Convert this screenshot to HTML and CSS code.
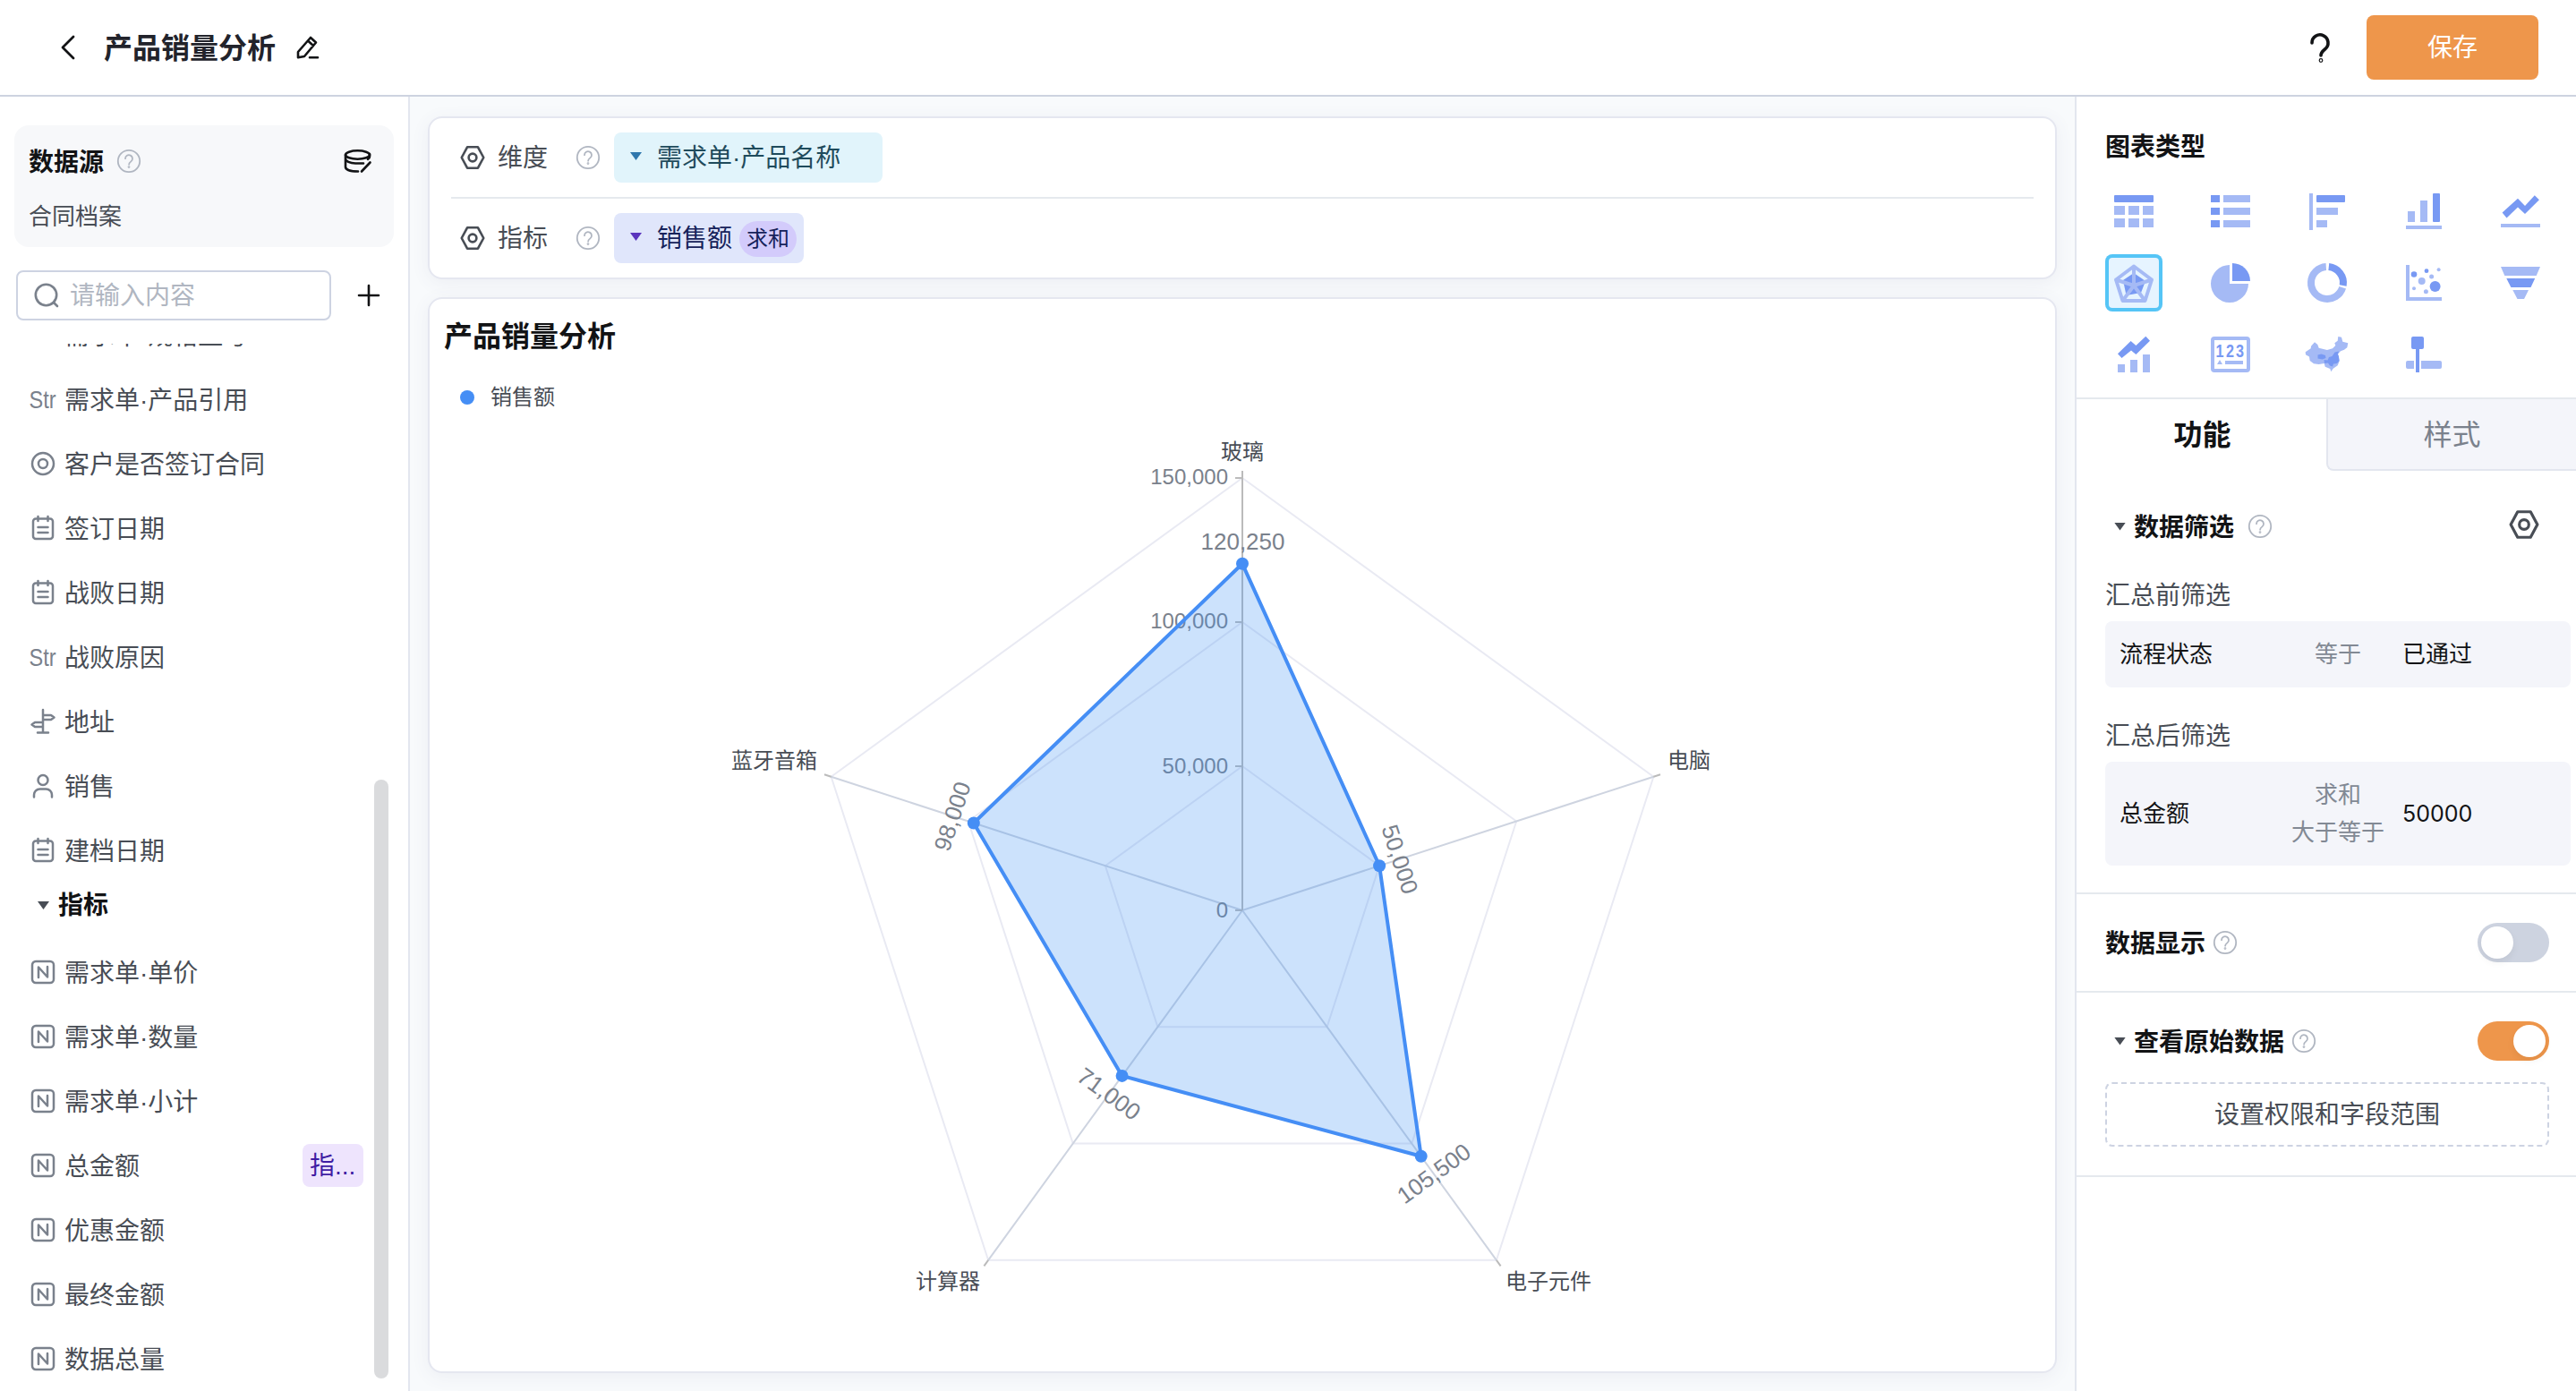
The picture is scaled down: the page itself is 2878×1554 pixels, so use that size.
FILE: index.html
```html
<!DOCTYPE html>
<html lang="zh-CN">
<head>
    <meta charset="UTF-8">
    <title>产品销量分析</title>
    <link rel="stylesheet" href="styles.css">
</head>
<body>
    <!-- shared icons -->
    <svg class="sprite">
        <symbol id="i-help" viewBox="0 0 28 28"><circle cx="14" cy="14" r="12.2" /><path d="M10 11.2a4 4 0 1 1 6.4 3.2c-1.5 1.1-2.3 1.7-2.3 3.3" /><circle cx="14" cy="20.6" r="0.5" /></symbol>
        <symbol id="i-hex" viewBox="0 0 32 32"><path d="M9.2 2.6h13.6L30 16l-7.2 13.4H9.2L2 16z" /><circle cx="16" cy="16" r="5" /></symbol>
        <symbol id="i-date" viewBox="0 0 32 32"><path d="M10 5.5H8a3 3 0 0 0-3 3V25a3 3 0 0 0 3 3h16a3 3 0 0 0 3-3V8.500a3 3 0 0 0-3-3h-2M10.500 3v5M21.500 3v5M10.500 5.500h11M10.500 15h11M10.500 21h11" /></symbol>
        <symbol id="i-num" viewBox="0 0 32 32"><rect x="4" y="4" width="24" height="24" rx="4" /><path d="M11 22V10.500l10 11V10" /></symbol>
    </svg>

    <header class="header">
        <svg class="back" viewBox="0 0 18 28"><path d="M15 2 3 14l12 12" /></svg>
        <h1>产品销量分析</h1>
        <svg class="edit" viewBox="0 0 28 28"><path d="M3 19 17 3l6 5.500L10 24l-7 1.300zM14 6.500l6 5.500M16 25.200h9" /></svg>
        <svg class="ask" viewBox="0 0 28 36"><path d="M5 13a9 9 0 1 1 14.500 7c-3.500 2.800-4.500 4-4.500 7" /><circle cx="15" cy="32.500" r="0.6" /></svg>
        <button class="save">保存</button>
    </header>

    <div class="layout">
        <aside class="fields">
            <div class="source">
                <div class="source-head">
                    <b>数据源</b>
                    <svg class="help"><use href="#i-help" /></svg>
                    <svg class="db" viewBox="0 0 32 28"><ellipse cx="15.500" cy="7" rx="13.500" ry="4.700" /><path d="M2 7v4.500c0 2.500 5 5 11 5h9M2 11.500v4.500M2 15v5.500c0 3 5.500 5 14 5M29 6v3c0 1-.5 2-2 2.800M29.500 15.500 20 25.500" /></svg>
                </div>
                <div class="source-name">合同档案</div>
            </div>
            <div class="search-row">
                <div class="search">
                    <svg viewBox="0 0 28 28"><circle cx="13.500" cy="13.500" r="11.700" /><path d="m22 22 4 4" /></svg>
                    <span>请输入内容</span>
                </div>
                <svg class="plus" viewBox="0 0 28 28"><path d="M14 3v22M3 14h22" /></svg>
            </div>
            <div class="list">
                <div class="scrolled">
                    <div class="item"><svg class="str" viewBox="0 0 32 32"><text x="0.500" y="26" textLength="30" lengthAdjust="spacingAndGlyphs">Str</text></svg>需求单·规格型号</div>
                    <div class="item"><svg class="str" viewBox="0 0 32 32"><text x="0.500" y="26" textLength="30" lengthAdjust="spacingAndGlyphs">Str</text></svg>需求单·产品引用</div>
                    <div class="item"><svg viewBox="0 0 32 32"><circle cx="16" cy="16" r="12" /><circle cx="16" cy="16" r="5" /></svg>客户是否签订合同</div>
                    <div class="item"><svg><use href="#i-date" /></svg>签订日期</div>
                    <div class="item"><svg><use href="#i-date" /></svg>战败日期</div>
                    <div class="item"><svg class="str" viewBox="0 0 32 32"><text x="0.500" y="26" textLength="30" lengthAdjust="spacingAndGlyphs">Str</text></svg>战败原因</div>
                    <div class="item"><svg viewBox="0 0 32 32"><path d="M16 3v25M10 28.500h12M16 9h9l3.500 2.500L25 14h-9M16 17H7l-3.500 2.500L7 22h9" /></svg>地址</div>
                    <div class="item"><svg viewBox="0 0 32 32"><circle cx="16" cy="9.500" r="5.500" /><path d="M6 28.500V26a6.500 6.500 0 0 1 6.500-6.500h7A6.500 6.500 0 0 1 26 26v2.500" /></svg>销售</div>
                    <div class="item"><svg><use href="#i-date" /></svg>建档日期</div>
                    <div class="group"><i class="caret"></i>指标</div>
                    <div class="item"><svg><use href="#i-num" /></svg>需求单·单价</div>
                    <div class="item"><svg><use href="#i-num" /></svg>需求单·数量</div>
                    <div class="item"><svg><use href="#i-num" /></svg>需求单·小计</div>
                    <div class="item"><svg><use href="#i-num" /></svg>总金额<span class="tag">指...</span></div>
                    <div class="item"><svg><use href="#i-num" /></svg>优惠金额</div>
                    <div class="item"><svg><use href="#i-num" /></svg>最终金额</div>
                    <div class="item"><svg><use href="#i-num" /></svg>数据总量</div>
                </div>
                <div class="scrollbar"></div>
            </div>
        </aside>

        <main class="board">
            <section class="card config">
                <div class="config-row">
                    <svg class="hex"><use href="#i-hex" /></svg>
                    <span class="config-label">维度</span>
                    <svg class="help"><use href="#i-help" /></svg>
                    <div class="chip chip-dim"><i class="caret"></i>需求单·产品名称</div>
                </div>
                <div class="config-row">
                    <svg class="hex"><use href="#i-hex" /></svg>
                    <span class="config-label">指标</span>
                    <svg class="help"><use href="#i-help" /></svg>
                    <div class="chip chip-metric"><i class="caret"></i>销售额<span class="pill">求和</span></div>
                </div>
            </section>

            <section class="card chart">
                <h2>产品销量分析</h2>
                <div class="legend"><i></i>销售额</div>
                <svg class="radar" viewBox="480 470 1816 1062">
                    <g class="grid">
                        <polygon points="1388,534 1847.400,867.700 1671.900,1407.800 1104.100,1407.800 928.600,867.700" />
                        <polygon points="1388,695 1694.200,917.500 1577.300,1277.500 1198.700,1277.500 1081.800,917.500" />
                        <polygon points="1388,856 1541.100,967.200 1482.600,1147.300 1293.400,1147.300 1234.900,967.200" />
                    </g>
                    <path class="spokes" d="M1388 1017 1847.400 867.700M1388 1017l283.900 390.800M1388 1017l-283.900 390.800M1388 1017 928.600 867.700" />
                    <path class="axis" d="M1388 1017V526M1847.400 867.700l7.600-2.500M1671.900 1407.800l4.700 6.500M1104.100 1407.800l-4.700 6.500M928.600 867.700l-7.600-2.500M1380 534h8M1380 695h8M1380 856h8M1380 1017h8" />
                    <g class="ticks">
                        <text x="1372" y="541">150,000</text>
                        <text x="1372" y="702">100,000</text>
                        <text x="1372" y="864">50,000</text>
                        <text x="1372" y="1025">0</text>
                    </g>
                    <polygon class="area" points="1388,629.800 1541.100,967.200 1587.700,1291.800 1253.600,1201.900 1087.800,919.500" />
                    <g class="dots">
                        <circle cx="1388" cy="629.800" r="7" />
                        <circle cx="1541.100" cy="967.200" r="7" />
                        <circle cx="1587.700" cy="1291.800" r="7" />
                        <circle cx="1253.600" cy="1201.900" r="7" />
                        <circle cx="1087.800" cy="919.500" r="7" />
                    </g>
                    <g class="values">
                        <text transform="translate(1388.500 605)" y="9">120,250</text>
                        <text transform="translate(1564 960) rotate(72)" y="9">50,000</text>
                        <text transform="translate(1602 1311) rotate(-36)" y="9">105,500</text>
                        <text transform="translate(1239 1222) rotate(36)" y="9">71,000</text>
                        <text transform="translate(1064 912) rotate(-72)" y="9">98,000</text>
                    </g>
                    <g class="names">
                        <text x="1364" y="513">玻璃</text>
                        <text x="1863" y="858">电脑</text>
                        <text x="1682" y="1440">电子元件</text>
                        <text x="1023" y="1440">计算器</text>
                        <text x="817" y="858">蓝牙音箱</text>
                    </g>
                </svg>
            </section>
        </main>

        <aside class="settings">
            <div class="types">
                <h3>图表类型</h3>
                <div class="type-grid">
                    <svg viewBox="0 0 64 64"><rect class="d" x="10" y="14" width="44" height="8" rx="1" /><path d="M10 26h12v10H10zM26 26h12v10H26zM42 26h12v10H42zM10 40h12v10H10zM26 40h12v10H26zM42 40h12v10H42z" /></svg>
                    <svg viewBox="0 0 64 64"><path class="d" d="M10 14h10v8H10zM10 28h10v8H10zM10 42h10v8H10z" /><path d="M24 14h30v8H24zM24 28h30v8H24zM24 42h30v8H24z" /></svg>
                    <svg viewBox="0 0 64 64"><path d="M12 12h4v41h-4zM20 28h24v8H20zM20 42h12v8H20z" /><rect class="d" x="20" y="14" width="32" height="8" rx="1" /></svg>
                    <svg viewBox="0 0 64 64"><path d="M14 32h8v12h-8zM28 20h8v24h-8zM12 48h40v4H12z" /><rect class="d" x="42" y="12" width="8" height="32" rx="1" /></svg>
                    <svg viewBox="0 0 64 64"><path class="d" d="M11.600 33.500 29 17.700l8 8.300L47.800 14.300l5.100 5L37 35l-8-7.500-12.500 12z" /><path d="M10 46h44v4H10z" /></svg>

                    <svg class="active" viewBox="0 0 64 64"><path class="d" d="m32 21 13 9-5 13-16.500 3L20 29z" /><path class="line" d="m32 13.500 20 15L44.500 52h-25L12 28.500zM32 13.500V35M12 28.500 32 35l20-6.500M19.500 52 32 35l12.500 17" /></svg>
                    <svg viewBox="0 0 64 64"><path d="M31 12v21h21A21 21 0 1 1 31 12z" /><path class="d" d="M34 10a20 20 0 0 1 20 20H34z" /></svg>
                    <svg viewBox="0 0 64 64"><path class="ring" d="M49.200 37.300A18 18 0 1 1 30.800 14" /><path class="ring ring-d" d="M33.800 14A18 18 0 0 1 49.700 35" /></svg>
                    <svg viewBox="0 0 64 64"><path d="M12 12h4v36h36v4H12z" /><circle class="d" cx="21" cy="22.500" r="3.300" /><circle class="d" cx="35" cy="18.700" r="2.400" /><circle cx="48.600" cy="17.300" r="2" /><circle cx="29.700" cy="30" r="4" /><circle cx="40.600" cy="25" r="2.500" /><circle class="d" cx="44.600" cy="36" r="6" /><circle cx="21" cy="38.300" r="2" /><circle cx="34.400" cy="41.700" r="2.500" /></svg>
                    <svg viewBox="0 0 64 64"><path d="M10 14h44l-4.300 10H14.300zM23.300 40H41l-5 10h-7.500z" /><path class="d" d="M16.300 27h31.900l-4.700 10H21.400z" /></svg>

                    <svg viewBox="0 0 64 64"><path class="d" d="m14 31.300 14.600-14.300 5.800 5 10.900-10.300 4.700 5L34.400 32 29 27.500 18.500 36z" /><path d="M14 43h8v9h-8zM28 38h8v14h-8zM42 32h8v20h-8z" /></svg>
                    <svg viewBox="0 0 64 64"><rect class="line" x="12" y="14" width="40" height="36" rx="2" /><g class="d"><text x="15.500" y="34.500" textLength="9" lengthAdjust="spacingAndGlyphs">1</text><text x="27" y="34.500" textLength="9" lengthAdjust="spacingAndGlyphs">2</text><text x="38" y="34.500" textLength="9" lengthAdjust="spacingAndGlyphs">3</text></g><path d="m20 38 3 5h-6zM26 39h20v4H26z" /></svg>
                    <svg viewBox="0 0 64 64"><path d="m7.700 29.300 6-4 .3-2.600 4-4.400 3.300 2.700 1.400 3.700L32 27l6-1.700 3.300-3.300-1-2.700 3.400-2.600.6-4.700 3.700.7 1.300 5 6 1.600-1 5-3.300 2.400-4 1.600-3.300 3.400 1 2 1 5.600-2 5-5 3.400-2.400 3.600-1-3.300-5.600-2.300-1-3.700-6 1-5.700-.7-4.300-3.300-.7-4.400-4-2.300z" /><path class="d" d="m21.500 32.500 4-1 4.500 1.500.5 3-4 1.500-5-1zM28.500 38l4 .5 1.500-3.500 3.500-1 3-4.500 4.500-1-1 3 1 3 .5 4.500-2.500 3-4 .5-1 3-3-1-2-3-4 .5z" /></svg>
                    <svg viewBox="0 0 64 64"><path d="M12 41a2 2 0 0 1 2-2h7v9h-7a2 2 0 0 1-2-2zM29 39h21a2 2 0 0 1 2 2v5a2 2 0 0 1-2 2H29z" /><path class="d" d="M20 12h10a2 2 0 0 1 2 2v10a2 2 0 0 1-2 2h-3v26h-4V26h-3a2 2 0 0 1-2-2V14a2 2 0 0 1 2-2z" /></svg>
                </div>
            </div>

            <div class="tabs">
                <div class="tab tab-on">功能</div>
                <div class="tab">样式</div>
            </div>

            <div class="section filter">
                <div class="section-head">
                    <i class="caret"></i><b>数据筛选</b>
                    <svg class="help"><use href="#i-help" /></svg>
                    <svg class="hex"><use href="#i-hex" /></svg>
                </div>
                <p>汇总前筛选</p>
                <div class="rule"><span>流程状态</span><span class="op">等于</span><span>已通过</span></div>
                <p>汇总后筛选</p>
                <div class="rule"><span>总金额</span><span class="op">求和<br>大于等于</span><span class="num">50000</span></div>
            </div>

            <div class="section display">
                <div class="section-head">
                    <b>数据显示</b>
                    <svg class="help"><use href="#i-help" /></svg>
                    <span class="toggle"></span>
                </div>
            </div>

            <div class="section raw">
                <div class="section-head">
                    <i class="caret"></i><b>查看原始数据</b>
                    <svg class="help"><use href="#i-help" /></svg>
                    <span class="toggle toggle-on"></span>
                </div>
                <button class="scope">设置权限和字段范围</button>
            </div>
        </aside>
    </div>
</body>
</html>
```
FILE: styles.css
```css
* { box-sizing: border-box; }
body {
    margin: 0;
    height: 1554px;
    overflow: hidden;
    display: flex;
    flex-direction: column;
    font-family: "Liberation Sans", "Noto Sans CJK SC", sans-serif;
    font-size: 28px;
    line-height: 40px;
    color: #484d55;
    background: #fff;
}
h1, h2, h3, p { margin: 0; }
b, h2, h3 { color: #121315; font-weight: 700; }
svg { flex: none; fill: none; stroke-linecap: round; stroke-linejoin: round; }
button { font: inherit; cursor: pointer; }
.sprite { display: none; }

.caret {
    flex: none;
    width: 13px;
    height: 9px;
    background: #484d55;
    clip-path: polygon(0 0, 100% 0, 50% 100%);
}
.help { width: 28px; height: 28px; stroke: #b0b6c1; stroke-width: 1.8; }
.hex { width: 28px; height: 28px; stroke: #484d55; stroke-width: 3; }

/* header */
.header {
    flex: none;
    height: 108px;
    padding: 0 42px 0 67px;
    display: flex;
    align-items: center;
    border-bottom: 2px solid #cdd3e0;
}
.header svg { stroke: #121315; }
.back { width: 18px; height: 28px; stroke-width: 2.8; }
h1 { margin: 0 22px 0 31px; padding-top: 2px; font-size: 32px; font-weight: 700; color: #22232b; }
.edit { width: 28px; height: 28px; stroke-width: 2.6; }
.ask { width: 28px; height: 36px; margin-left: auto; stroke-width: 3.6; }
.save {
    width: 192px;
    height: 72px;
    margin-left: 38px;
    padding-top: 3px;
    border: 0;
    border-radius: 8px;
    background: #ee964b;
    color: #fff;
}

.layout { flex: 1; min-height: 0; display: flex; }

/* field list */
.fields {
    width: 458px;
    border-right: 2px solid #e3e6ef;
    display: flex;
    flex-direction: column;
}
.source {
    margin: 32px 16px 26px;
    height: 136px;
    padding: 20px 24px 0 16px;
    border-radius: 16px;
    background: #f7f8fa;
}
.source-head { display: flex; align-items: center; height: 40px; }
.source-head b, .section-head b { padding-top: 3px; }
.source-head .help { margin-left: 14px; }
.db { width: 32px; height: 28px; margin-left: auto; stroke: #121315; stroke-width: 2.6; }
.source-name { margin-top: 22px; font-size: 26px; }
.search-row { display: flex; align-items: center; padding: 0 30px 0 18px; }
.search {
    width: 352px;
    height: 56px;
    padding-left: 18px;
    display: flex;
    align-items: center;
    gap: 12px;
    border: 2px solid #cdd3e2;
    border-radius: 8px;
    color: #b0b6c1;
}
.search span { padding-top: 2px; }
.search svg { width: 28px; height: 28px; stroke: #7a818c; stroke-width: 2.6; }
.plus { width: 28px; height: 28px; margin-left: auto; stroke: #121315; stroke-width: 2.6; }
.list {
    flex: 1;
    min-height: 0;
    margin-top: 26px;
    display: flex;
    justify-content: space-between;
    overflow: hidden;
}
.scrolled { width: 406px; margin-top: -46px; }
.item {
    height: 72px;
    padding: 3px 0 0 32px;
    display: flex;
    align-items: center;
}
.item svg { width: 32px; height: 32px; margin: -3px 8px 0 0; stroke: #7a818c; stroke-width: 2.5; }
.item .str { fill: #7a818c; stroke: none; font-size: 28px; }
.group {
    height: 64px;
    padding: 6px 0 0 42px;
    display: flex;
    gap: 10px;
    color: #121315;
    font-weight: 700;
}
.group .caret { margin-top: 15px; }
.tag {
    width: 68px;
    height: 48px;
    margin: -3px 0 0 auto;
    padding: 1px 0 0 8px;
    line-height: 48px;
    border-radius: 8px;
    background: #eee4fd;
    color: #3f1da3;
}
.scrollbar {
    width: 16px;
    height: 669px;
    margin: 487px 22px 0 0;
    border-radius: 8px;
    background: #dadbdd;
}

/* middle board */
.board {
    width: 1860px;
    padding: 22px 20px 20px;
    display: flex;
    flex-direction: column;
    gap: 20px;
    background: #f8fafc;
}
.card {
    border: 2px solid #e5e7f0;
    border-radius: 16px;
    background: #fff;
    box-shadow: 0 4px 20px rgba(80, 90, 130, 0.07);
}
.config { flex: none; height: 182px; padding: 0 24px; }
.config-row {
    height: 88px;
    padding-left: 10px;
    display: flex;
    align-items: center;
}
.config-row + .config-row { height: 90px; border-top: 2px solid #e5e9ee; }
.config-label { margin: 0 31px 0 14px; padding-top: 1px; }
.chip {
    height: 56px;
    margin-left: 15px;
    padding: 1px 8px 0 18px;
    display: flex;
    align-items: center;
    border-radius: 8px;
}
.chip .caret { margin: -4px 17px 0 0; }
.chip-dim { width: 300px; background: #e1f4fb; color: #1f4b5c; }
.chip-dim .caret { background: #2f77ad; }
.chip-metric { width: 212px; background: #e0e6fb; color: #16225a; }
.chip-metric .caret { background: #5b35bd; }
.pill {
    margin-left: auto;
    padding: 0 8px;
    border-radius: 20px;
    background: #d3cbfb;
    font-size: 24px;
}
.chart { flex: 1; min-height: 0; display: flex; flex-direction: column; }
.chart h2 { margin: 22px 0 0 16px; font-size: 32px; }
.legend {
    margin: 28px 0 0 34px;
    display: flex;
    align-items: center;
    gap: 18px;
    font-size: 24px;
}
.legend i { width: 16px; height: 16px; border-radius: 50%; background: #458ef5; }

/* radar */
.radar { width: 1816px; height: 1062px; margin-top: 6px; font-size: 24px; }
.grid { stroke: #e9eaf3; stroke-width: 2; }
.spokes { stroke: #ced4e0; stroke-width: 2; }
.axis { stroke: #bbb; stroke-width: 2; stroke-linecap: butt; }
.ticks { fill: #7a818c; text-anchor: end; }
.area { fill: rgba(66, 148, 245, 0.27); stroke: #458ef5; stroke-width: 4; }
.dots { fill: #458ef5; }
.values { fill: #7a818c; font-size: 26px; text-anchor: middle; }
.names { fill: #484d55; }

/* settings */
.settings { width: 560px; border-left: 2px solid #e3e6ef; }
.types { height: 338px; padding: 37px 30px 0 32px; border-bottom: 2px solid #e5e9ee; }
h3 { font-size: 28px; }
.type-grid {
    margin-top: 19px;
    display: grid;
    grid-template-columns: repeat(5, 64px);
    gap: 16px 44px;
}
.type-grid svg { width: 64px; height: 64px; fill: #a5baf5; }
.type-grid .active { border-radius: 8px; background: #e6f4ff; box-shadow: inset 0 0 0 4px #55c5f6; }
.type-grid .d { fill: #7899f3; }
.type-grid .line { fill: none; stroke: #a5baf5; stroke-width: 4; }
.type-grid .ring { fill: none; stroke: #a5baf5; stroke-width: 8; stroke-linecap: butt; }
.type-grid .ring-d { stroke: #7899f3; }
.type-grid text { font-size: 20px; font-weight: 700; }

.tabs { display: flex; height: 80px; }
.tab {
    flex: 1;
    padding-top: 1px;
    border: solid #e3e6ef;
    border-width: 0 0 2px 2px;
    border-bottom-left-radius: 8px;
    background: #f4f5fa;
    color: #7a818c;
    font-size: 32px;
    line-height: 78px;
    text-align: center;
}
.tab-on { border-color: transparent; background: none; color: #121315; font-weight: 700; }

.section { border-bottom: 2px solid #e5e9ee; padding: 32px 30px 0 32px; }
.section-head { display: flex; align-items: center; height: 44px; }
.section-head .caret { margin: 0 9px 0 10px; }
.section-head .help { margin-left: 8px; }
.filter { height: 473px; padding: 40px 6px 0 32px; }
.filter .help { margin-left: 15px; }
.filter .hex { width: 34px; height: 34px; margin: -4px 35px 0 auto; stroke-width: 3; }
.filter p { margin: 36px 0 8px; }
.rule {
    padding: 16px;
    display: grid;
    grid-template-columns: 178px 132px 1fr;
    align-items: center;
    border-radius: 8px;
    background: #f4f5fa;
    color: #121315;
    font-size: 26px;
    line-height: 42px;
}
.rule span:last-child { padding-left: 6px; }
.rule .op { color: #828994; text-align: center; }
.filter .rule + p { margin-top: 35px; }
.num { font-family: Inter, sans-serif; font-size: 25px; }
.display { height: 110px; }
.raw { height: 206px; }
.toggle {
    width: 80px;
    height: 44px;
    margin-left: auto;
    padding: 4px;
    display: flex;
    border-radius: 22px;
    background: #cdd3e0;
}
.toggle::before {
    content: "";
    width: 36px;
    height: 36px;
    border-radius: 50%;
    background: #fff;
    box-shadow: 0 4px 8px rgba(0, 0, 0, 0.06);
}
.toggle-on { justify-content: flex-end; background: #ee964b; }
.scope {
    width: 496px;
    height: 72px;
    margin-top: 24px;
    padding-top: 3px;
    border: 2px dashed #cdd3e2;
    border-radius: 8px;
    background: #fff;
    color: #484d55;
}
```
